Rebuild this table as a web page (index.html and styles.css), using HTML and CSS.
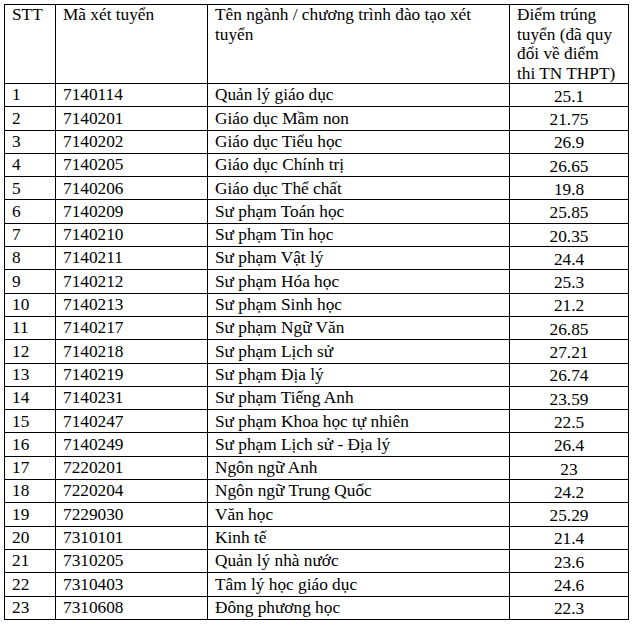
FILE: index.html
```html
<!DOCTYPE html>
<html lang="vi">
<head>
<meta charset="utf-8">
<link rel="stylesheet" href="styles.css">
</head>
<body>
<table class="scores">
  <colgroup>
    <col class="c-stt">
    <col class="c-ma">
    <col class="c-ten">
    <col class="c-diem">
  </colgroup>
  <thead>
    <tr class="head">
      <th>STT</th>
      <th>Mã xét tuyển</th>
      <th>Tên ngành / chương trình đào tạo xét<br>tuyển</th>
      <th>Điểm trúng<br>tuyển (đã quy<br>đổi về điểm<br>thi TN THPT)</th>
    </tr>
  </thead>
  <tbody>
    <tr><td>1</td><td>7140114</td><td>Quản lý giáo dục</td><td class="num">25.1</td></tr>
    <tr><td>2</td><td>7140201</td><td>Giáo dục Mầm non</td><td class="num">21.75</td></tr>
    <tr><td>3</td><td>7140202</td><td>Giáo dục Tiểu học</td><td class="num">26.9</td></tr>
    <tr><td>4</td><td>7140205</td><td>Giáo dục Chính trị</td><td class="num">26.65</td></tr>
    <tr><td>5</td><td>7140206</td><td>Giáo dục Thể chất</td><td class="num">19.8</td></tr>
    <tr><td>6</td><td>7140209</td><td>Sư phạm Toán học</td><td class="num">25.85</td></tr>
    <tr><td>7</td><td>7140210</td><td>Sư phạm Tin học</td><td class="num">20.35</td></tr>
    <tr><td>8</td><td>7140211</td><td>Sư phạm Vật lý</td><td class="num">24.4</td></tr>
    <tr><td>9</td><td>7140212</td><td>Sư phạm Hóa học</td><td class="num">25.3</td></tr>
    <tr><td>10</td><td>7140213</td><td>Sư phạm Sinh học</td><td class="num">21.2</td></tr>
    <tr><td>11</td><td>7140217</td><td>Sư phạm Ngữ Văn</td><td class="num">26.85</td></tr>
    <tr><td>12</td><td>7140218</td><td>Sư phạm Lịch sử</td><td class="num">27.21</td></tr>
    <tr><td>13</td><td>7140219</td><td>Sư phạm Địa lý</td><td class="num">26.74</td></tr>
    <tr><td>14</td><td>7140231</td><td>Sư phạm Tiếng Anh</td><td class="num">23.59</td></tr>
    <tr><td>15</td><td>7140247</td><td>Sư phạm Khoa học tự nhiên</td><td class="num">22.5</td></tr>
    <tr><td>16</td><td>7140249</td><td>Sư phạm Lịch sử - Địa lý</td><td class="num">26.4</td></tr>
    <tr><td>17</td><td>7220201</td><td>Ngôn ngữ Anh</td><td class="num">23</td></tr>
    <tr><td>18</td><td>7220204</td><td>Ngôn ngữ Trung Quốc</td><td class="num">24.2</td></tr>
    <tr><td>19</td><td>7229030</td><td>Văn học</td><td class="num">25.29</td></tr>
    <tr><td>20</td><td>7310101</td><td>Kinh tế</td><td class="num">21.4</td></tr>
    <tr><td>21</td><td>7310205</td><td>Quản lý nhà nước</td><td class="num">23.6</td></tr>
    <tr><td>22</td><td>7310403</td><td>Tâm lý học giáo dục</td><td class="num">24.6</td></tr>
    <tr><td>23</td><td>7310608</td><td>Đông phương học</td><td class="num">22.3</td></tr>
  </tbody>
</table>
</body>
</html>
```

FILE: styles.css
```css
html, body {
  margin: 0;
  padding: 0;
  background: #ffffff;
}

body {
  padding: 4px 0 0 4px;
  font-family: "Liberation Serif", "Times New Roman", serif;
  font-size: 17.3px;
  color: #000000;
}

.scores {
  border-collapse: collapse;
  table-layout: fixed;
  width: 624px;
}

.c-stt { width: 51px; }
.c-ma { width: 152px; }
.c-ten { width: 302px; }
.c-diem { width: 119px; }

.scores th,
.scores td {
  border: 1px solid #000000;
  padding: 0 2px 0 7px;
  text-align: left;
  font-weight: normal;
  white-space: nowrap;
  line-height: 19.5px;
}

.head th {
  vertical-align: top;
}

.scores tbody tr {
  height: 23.3px;
}

.scores td {
  vertical-align: middle;
}

.scores td.num {
  text-align: center;
  vertical-align: bottom;
  padding: 0;
}
```
